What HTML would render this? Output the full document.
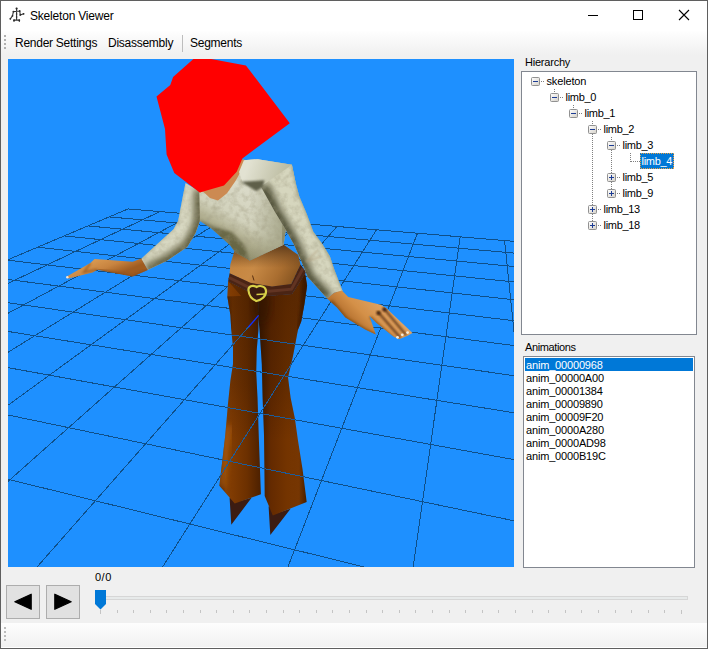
<!DOCTYPE html>
<html><head><meta charset="utf-8"><title>Skeleton Viewer</title>
<style>
html,body{margin:0;padding:0;}
body{width:708px;height:649px;overflow:hidden;background:#f0f0f0;position:relative;font-family:"Liberation Sans",sans-serif;color:#000;}
.abs{position:absolute;}
#win{position:absolute;left:0;top:0;width:708px;height:649px;box-sizing:border-box;border:1px solid #5f5f5f;background:#f0f0f0;}
#title{left:1px;top:1px;width:706px;height:30px;background:#fff;}
#title .t{left:29px;top:8px;font-size:12px;line-height:14px;white-space:nowrap;letter-spacing:-0.2px;}
#menu{left:1px;top:31px;width:706px;height:24px;background:linear-gradient(#fefefe,#f0f0f0);}
#menu span{position:absolute;top:5px;font-size:12px;line-height:14px;white-space:nowrap;letter-spacing:-0.26px;}
.lbl{font-size:11px;line-height:13px;white-space:nowrap;}
#tree{left:521px;top:71px;width:176px;height:264px;box-sizing:border-box;border:1px solid #828790;background:#fff;}
#list{left:523px;top:356px;width:172px;height:212px;box-sizing:border-box;border:1px solid #828790;background:#fff;}
#list div{letter-spacing:-0.17px;position:absolute;left:2px;font-size:11px;line-height:15px;height:13px;white-space:nowrap;}
#list .sel{left:1px;width:168px;background:#0078d7;color:#fff;padding-left:1px;box-sizing:border-box;}
.tn{position:absolute;font-size:11px;line-height:16px;height:16px;white-space:nowrap;}
.btn{width:34px;height:34px;box-sizing:border-box;border:1px solid #adadad;background:#e1e1e1;}
#status{left:1px;top:623px;width:706px;height:25px;background:linear-gradient(#fdfdfd,#f1f1f1 96%,#fff 96%);}
</style></head><body>
<div id="win"></div>
<div id="title" class="abs">
<svg class="abs" style="left:7px;top:5px" width="20" height="20" viewBox="8 6 20 20"><g stroke="#333" stroke-width="1.1" fill="none" stroke-linecap="round"><path d="M16.600 8.400V20M13.400 11.600L19.700 11M13.400 11.600L12.500 15.800L10.300 18.800M19.700 11L20.300 14.900L23.600 13.800M14 20.100H19.400M14 20.100V21.400M19.300 20.100V21.400"/></g><g fill="#2a2a2a"><circle cx="16.600" cy="8.500" r="1.100"/><circle cx="13.400" cy="11.600" r=".9"/><circle cx="19.700" cy="11" r=".9"/><circle cx="12.500" cy="15.800" r=".9"/><circle cx="10.300" cy="18.800" r=".9"/><circle cx="20.300" cy="14.900" r=".9"/><circle cx="23.600" cy="13.800" r=".9"/><circle cx="16.600" cy="14" r=".8"/><circle cx="16.600" cy="17.100" r=".8"/><circle cx="14" cy="20.200" r=".9"/><circle cx="19.300" cy="20.200" r=".9"/></g></svg>
<div class="abs t">Skeleton Viewer</div>
<svg class="abs" style="left:570px;top:0" width="136" height="30" viewBox="0 0 136 30"><g stroke="#000" stroke-width="1" fill="none" shape-rendering="crispEdges"><path d="M17 14.5h10"/><rect x="62.5" y="9.5" width="9" height="9"/></g><path d="M108 9l10 10M118 9l-10 10" stroke="#000" stroke-width="1.1" fill="none"/></svg>
</div>
<div id="menu" class="abs">
<svg class="abs" style="left:2px;top:2px" width="4" height="18"><g fill="#b0b0b0"><rect x="1" y="2" width="2" height="2"/><rect x="1" y="6" width="2" height="2"/><rect x="1" y="10" width="2" height="2"/><rect x="1" y="14" width="2" height="2"/></g></svg>
<span style="left:14px">Render Settings</span><span style="left:107px">Disassembly</span>
<div class="abs" style="left:181px;top:4px;width:1px;height:17px;background:#bdbdbd"></div>
<span style="left:189px">Segments</span>
</div>
<!-- VIEWPORT -->
<svg id="vp" class="abs" style="left:8px;top:59px" width="506" height="508" viewBox="8 59 506 508">
<defs>
<linearGradient id="gLegL" gradientUnits="userSpaceOnUse" x1="221" y1="0" x2="261" y2="0"><stop offset="0" stop-color="#522400"/><stop offset=".12" stop-color="#844006"/><stop offset=".3" stop-color="#7e3a02"/><stop offset=".65" stop-color="#6c3000"/><stop offset="1" stop-color="#4c2000"/></linearGradient>
<linearGradient id="gLegL2" gradientUnits="userSpaceOnUse" x1="219" y1="470" x2="262" y2="486"><stop offset="0" stop-color="#6a3000"/><stop offset=".15" stop-color="#a4560c"/><stop offset=".45" stop-color="#854004"/><stop offset="1" stop-color="#5a2600"/></linearGradient>
<linearGradient id="gLegR" gradientUnits="userSpaceOnUse" x1="259" y1="0" x2="306" y2="0"><stop offset="0" stop-color="#3a1800"/><stop offset=".25" stop-color="#642a00"/><stop offset=".6" stop-color="#743400"/><stop offset=".85" stop-color="#763602"/><stop offset="1" stop-color="#4a2000"/></linearGradient>
<linearGradient id="gThigh" gradientUnits="userSpaceOnUse" x1="0" y1="300" x2="0" y2="440"><stop offset="0" stop-color="#200c00" stop-opacity=".32"/><stop offset=".6" stop-color="#200c00" stop-opacity=".2"/><stop offset="1" stop-color="#200c00" stop-opacity="0"/></linearGradient>
<linearGradient id="gBelly" gradientUnits="userSpaceOnUse" x1="236" y1="250" x2="296" y2="284"><stop offset="0" stop-color="#c4843e"/><stop offset=".35" stop-color="#c88a46"/><stop offset=".7" stop-color="#aa6e30"/><stop offset="1" stop-color="#80501e"/></linearGradient>
<linearGradient id="gBellySh" gradientUnits="userSpaceOnUse" x1="0" y1="246" x2="0" y2="268"><stop offset="0" stop-color="#5a3818" stop-opacity=".9"/><stop offset="1" stop-color="#6a4420" stop-opacity="0"/></linearGradient>
<linearGradient id="gBlouse" gradientUnits="userSpaceOnUse" x1="222" y1="252" x2="262" y2="180"><stop offset="0" stop-color="#7e7c58"/><stop offset=".28" stop-color="#b4b294"/><stop offset=".45" stop-color="#d2d2bc"/><stop offset="1" stop-color="#dedece"/></linearGradient>
<linearGradient id="gBlouseR" gradientUnits="userSpaceOnUse" x1="250" y1="0" x2="290" y2="0"><stop offset="0" stop-color="#909070" stop-opacity="0"/><stop offset="1" stop-color="#8c8c6a" stop-opacity=".75"/></linearGradient>
<linearGradient id="gArmL" gradientUnits="userSpaceOnUse" x1="160" y1="222" x2="186" y2="252"><stop offset="0" stop-color="#d8d8c2"/><stop offset=".45" stop-color="#d0d0b6"/><stop offset="1" stop-color="#8a8a60"/></linearGradient>
<linearGradient id="gArmR" gradientUnits="userSpaceOnUse" x1="272" y1="230" x2="312" y2="214"><stop offset="0" stop-color="#5e5e42"/><stop offset=".3" stop-color="#b8b89a"/><stop offset=".6" stop-color="#d8d8c0"/><stop offset="1" stop-color="#b0b090"/></linearGradient>
<linearGradient id="gShould" gradientUnits="userSpaceOnUse" x1="250" y1="160" x2="290" y2="175"><stop offset="0" stop-color="#e2e2d2"/><stop offset="1" stop-color="#b8b89c"/></linearGradient>
<linearGradient id="gHandL" gradientUnits="userSpaceOnUse" x1="100" y1="258" x2="108" y2="278"><stop offset="0" stop-color="#d89850"/><stop offset=".5" stop-color="#c88440"/><stop offset="1" stop-color="#a05c20"/></linearGradient>
<linearGradient id="gHandR" gradientUnits="userSpaceOnUse" x1="345" y1="325" x2="375" y2="295"><stop offset="0" stop-color="#a86424"/><stop offset=".5" stop-color="#d49048"/><stop offset="1" stop-color="#e0a464"/></linearGradient>
<filter id="b3" x="-20%" y="-20%" width="140%" height="140%"><feGaussianBlur stdDeviation="3"/></filter><filter id="b2" x="-20%" y="-20%" width="140%" height="140%"><feGaussianBlur stdDeviation="1.800"/></filter><filter id="b1" x="-20%" y="-20%" width="140%" height="140%"><feGaussianBlur stdDeviation="0.900"/></filter>
<filter id="tex" x="0" y="0" width="100%" height="100%"><feTurbulence type="fractalNoise" baseFrequency="0.160" numOctaves="3" seed="7" result="n"/><feColorMatrix in="n" type="matrix" values="0 0 0 0 0.350  0 0 0 0 0.330  0 0 0 0 0.220  1.600 0 0 0 -0.620"/><feComposite in2="SourceGraphic" operator="in"/></filter>
<clipPath id="cArmR"><polygon points="264.2,184.2 291.9,164.8 295.6,182.4 299.3,196.2 306.7,213.8 313.2,231.4 322.5,244.3 329.9,256.3 334.5,270.0 342.6,291.0 334.1,292.7 327.1,298.4 307.7,277.1 301.2,261.0 293.8,244.3 285.5,229.5 274.4,211.0 260.5,186.0"/></clipPath><clipPath id="cArmL"><polygon points="185.5,183.0 182.7,197.0 178.1,221.0 173.5,229.3 154.0,246.9 141.1,258.9 147.6,270.0 167.0,260.8 187.3,246.9 195.6,233.0 199.9,221.0 200.5,192.0"/></clipPath><clipPath id="cBlouse"><polygon points="199.3,191.0 210.0,191.0 240.0,160.5 257.7,159.2 291.9,164.8 293.0,200.0 285.5,231.4 283.6,244.8 249.9,260.6 235.4,252.5 229.9,245.1 211.4,228.4 199.9,221.0"/></clipPath><clipPath id="cHandR"><polygon points="341.9,290.6 348.2,296.9 380.7,304.7 386.4,308.2 412.5,333.0 407.6,335.8 399.1,339.3 393.4,336.5 376.5,323.1 369.4,316.0 375.8,334.4 365.2,329.4 345.4,317.4 337.0,307.5 327.1,298.4 334.1,292.7"/></clipPath><clipPath id="cHandL"><polygon points="141.2,258.4 132.7,261.7 94.6,259.1 90.4,263.1 66.4,276.8 68.5,278.6 92.5,272.5 97.4,269.7 132.7,276.4 147.8,269.9"/></clipPath><clipPath id="cBelly"><polygon points="235.0,249.6 249.7,260.4 283.6,244.8 298.2,255.0 300.5,265.0 291.3,284.5 272.0,287.0 250.4,283.2 229.6,273.5 230.4,264.3"/></clipPath>
<clipPath id="cBelow"><polygon points="200,317.800 320,333.600 320,567 200,567"/></clipPath><clipPath id="cPants"><polygon points="228.1,281.0 250.4,292.5 258.6,295.0 258.4,330.0 256.7,350.3 256.2,372.4 257.5,397.8 258.9,440.0 260.9,494.3 234.7,503.6 219.4,485.8 225.3,435.0 227.9,404.6 230.4,380.8 233.0,363.9 233.0,347.0 231.3,330.0 230.4,315.1 227.3,296.6 258.6,295.0 268.9,295.7 292.0,294.0 305.1,273.5 307.1,285.8 304.4,304.3 301.3,321.3 297.9,330.0 293.1,355.4 288.0,377.5 290.6,397.8 294.8,418.1 297.9,440.0 302.5,468.9 306.7,502.0 272.8,515.5 264.7,496.0 264.0,435.0 262.6,397.8 261.8,363.9 259.6,330.0 258.2,315.5"/></clipPath>
</defs>
<rect x="8" y="59" width="506" height="508" fill="#1e90ff"/>
<g stroke="#0f4f88" stroke-width="1" shape-rendering="crispEdges"><line x1="128.1" y1="208.9" x2="599.1" y2="248.5"/><line x1="109.1" y1="216.9" x2="606.8" y2="261.4"/><line x1="87.9" y1="225.9" x2="615.6" y2="276.2"/><line x1="64.2" y1="235.9" x2="625.7" y2="293.4"/><line x1="37.4" y1="247.2" x2="637.6" y2="313.4"/><line x1="7.1" y1="260.1" x2="651.8" y2="337.2"/><line x1="-27.6" y1="274.8" x2="668.8" y2="365.8"/><line x1="-67.8" y1="291.8" x2="689.6" y2="401.0"/><line x1="-114.8" y1="311.7" x2="715.9" y2="445.2"/><line x1="-170.5" y1="335.2" x2="749.9" y2="502.5"/><line x1="-237.7" y1="363.6" x2="795.7" y2="579.7"/><line x1="-320.1" y1="398.5" x2="860.8" y2="689.2"/><line x1="-423.7" y1="442.3" x2="960.4" y2="857.0"/><line x1="128.1" y1="208.9" x2="-423.7" y2="442.3"/><line x1="159.9" y1="211.6" x2="-365.4" y2="459.8"/><line x1="192.9" y1="214.3" x2="-301.5" y2="478.9"/><line x1="227.0" y1="217.2" x2="-231.4" y2="499.9"/><line x1="262.3" y1="220.2" x2="-154.0" y2="523.1"/><line x1="299.0" y1="223.3" x2="-68.1" y2="548.9"/><line x1="337.0" y1="226.5" x2="27.7" y2="577.6"/><line x1="376.5" y1="229.8" x2="135.4" y2="609.8"/><line x1="417.5" y1="233.2" x2="257.1" y2="646.3"/><line x1="460.2" y1="236.8" x2="395.9" y2="687.9"/><line x1="504.6" y1="240.6" x2="555.7" y2="735.8"/><line x1="550.9" y1="244.4" x2="741.5" y2="791.5"/><line x1="599.1" y1="248.5" x2="960.4" y2="857.0"/></g>
<polygon points="229.6,497.7 231.3,524.8 251.6,497.7 240.0,501.0" fill="#3c1c12" /><polygon points="268.6,506.2 270.3,535.0 290.6,508.7 277.0,513.0" fill="#3c1c12" /><polygon points="228.1,281.0 250.4,292.5 258.6,295.0 258.4,330.0 256.7,350.3 256.2,372.4 257.5,397.8 258.9,440.0 260.9,494.3 234.7,503.6 219.4,485.8 225.3,435.0 227.9,404.6 230.4,380.8 233.0,363.9 233.0,347.0 231.3,330.0 230.4,315.1 227.3,296.6" fill="url(#gLegL)" /><polygon points="258.6,295.0 268.9,295.7 292.0,294.0 305.1,273.5 307.1,285.8 304.4,304.3 301.3,321.3 297.9,330.0 293.1,355.4 288.0,377.5 290.6,397.8 294.8,418.1 297.9,440.0 302.5,468.9 306.7,502.0 272.8,515.5 264.7,496.0 264.0,435.0 262.6,397.8 261.8,363.9 259.6,330.0 258.2,315.5" fill="url(#gLegR)" /><g clip-path="url(#cPants)"><polyline points="229.500,425 225,450 221,488" fill="none" stroke="#b05e0e" stroke-width="7" filter="url(#b3)" opacity=".8"/><rect x="215" y="275" width="100" height="170" fill="url(#gThigh)"/><ellipse cx="262" cy="303" rx="9" ry="20" fill="#341400" filter="url(#b3)" opacity=".55"/><polyline points="306,276 303,305 299,330" fill="none" stroke="#3a1800" stroke-width="5" filter="url(#b2)" opacity=".6"/><polyline points="228,283 228,300 231,330" fill="none" stroke="#3a1800" stroke-width="3" filter="url(#b2)" opacity=".5"/></g><g clip-path="url(#cBelow)"><g clip-path="url(#cPants)" stroke="#1c5c9a" stroke-width="1" shape-rendering="crispEdges"><line x1="128.1" y1="208.9" x2="599.1" y2="248.5"/><line x1="109.1" y1="216.9" x2="606.8" y2="261.4"/><line x1="87.9" y1="225.9" x2="615.6" y2="276.2"/><line x1="64.2" y1="235.9" x2="625.7" y2="293.4"/><line x1="37.4" y1="247.2" x2="637.6" y2="313.4"/><line x1="7.1" y1="260.1" x2="651.8" y2="337.2"/><line x1="-27.6" y1="274.8" x2="668.8" y2="365.8"/><line x1="-67.8" y1="291.8" x2="689.6" y2="401.0"/><line x1="-114.8" y1="311.7" x2="715.9" y2="445.2"/><line x1="-170.5" y1="335.2" x2="749.9" y2="502.5"/><line x1="-237.7" y1="363.6" x2="795.7" y2="579.7"/><line x1="-320.1" y1="398.5" x2="860.8" y2="689.2"/><line x1="-423.7" y1="442.3" x2="960.4" y2="857.0"/><line x1="128.1" y1="208.9" x2="-423.7" y2="442.3"/><line x1="159.9" y1="211.6" x2="-365.4" y2="459.8"/><line x1="192.9" y1="214.3" x2="-301.5" y2="478.9"/><line x1="227.0" y1="217.2" x2="-231.4" y2="499.9"/><line x1="262.3" y1="220.2" x2="-154.0" y2="523.1"/><line x1="299.0" y1="223.3" x2="-68.1" y2="548.9"/><line x1="337.0" y1="226.5" x2="27.7" y2="577.6"/><line x1="376.5" y1="229.8" x2="135.4" y2="609.8"/><line x1="417.5" y1="233.2" x2="257.1" y2="646.3"/><line x1="460.2" y1="236.8" x2="395.9" y2="687.9"/><line x1="504.6" y1="240.6" x2="555.7" y2="735.8"/><line x1="550.9" y1="244.4" x2="741.5" y2="791.5"/><line x1="599.1" y1="248.5" x2="960.4" y2="857.0"/></g></g><polygon points="235.0,249.6 249.7,260.4 283.6,244.8 298.2,255.0 300.5,265.0 291.3,284.5 272.0,287.0 250.4,283.2 229.6,273.5 230.4,264.3" fill="url(#gBelly)" /><polygon points="235.0,249.6 249.7,260.4 283.6,244.8 298.2,255.0 300.5,265.0 291.3,284.5 272.0,287.0 250.4,283.2 229.6,273.5 230.4,264.3" fill="url(#gBellySh)" /><path d="M252.5 275.5l1.5 5" stroke="#5a3010" stroke-width="1" fill="none"/><polygon points="229.6,273.3 250.4,282.8 272.0,286.6 291.3,284.0 300.5,264.5 305.9,272.0 305.1,274.0 292.0,294.3 268.9,295.9 250.4,292.8 228.1,281.2" fill="#4a2414" /><polyline points="229,277.5 250.4,288 269,291.3 291.5,289.2 303,268.5" fill="none" stroke="#623422" stroke-width="3"/><path d="M248.5 290.5c-.5-4 4-6 8-3.5c3.5-2 9.5-1 9.500 4.5c0 5-4.500 8.500-9.500 9.500c-4.500-1.500-7.500-5.500-8-10.500z" fill="#3a1c10" stroke="#d8d048" stroke-width="2.200"/><path d="M256.5 294.500l8.500-.5" stroke="#d8d048" stroke-width="1.500"/><polygon points="185.5,183.0 182.7,197.0 178.1,221.0 173.5,229.3 154.0,246.9 141.1,258.9 147.6,270.0 167.0,260.8 187.3,246.9 195.6,233.0 199.9,221.0 200.5,192.0" fill="#d8d8c2" /><g clip-path="url(#cArmL)"><polyline points="202,190 201.500,221 197,234 188.500,248.500 168,262.500 148,272" fill="none" stroke="#5e5c3e" stroke-width="16" filter="url(#b3)" opacity=".95"/><polyline points="184,183 181,197 176.500,221 172,229 153,246 140,258" fill="none" stroke="#a0a080" stroke-width="4" filter="url(#b2)" opacity=".6"/></g><polygon points="185.5,183.0 182.7,197.0 178.1,221.0 173.5,229.3 154.0,246.9 141.1,258.9 147.6,270.0 167.0,260.8 187.3,246.9 195.6,233.0 199.9,221.0 200.5,192.0" fill="#fff" filter="url(#tex)" opacity=".5"/><polygon points="141.2,258.4 132.7,261.7 94.6,259.1 90.4,263.1 66.4,276.8 68.5,278.6 92.5,272.5 97.4,269.7 132.7,276.4 147.8,269.9" fill="url(#gHandL)" /><circle cx="67.300" cy="277.300" r="1.200" fill="#f0e8e0"/><g clip-path="url(#cHandL)"><polyline points="90.400,263.100 84,272 97.400,269.700" fill="none" stroke="#9a5c20" stroke-width="2" filter="url(#b1)" opacity=".8"/><polyline points="97.400,270.700 132.700,277.400 148,271" fill="none" stroke="#8a4c14" stroke-width="4" filter="url(#b2)" opacity=".9"/></g><polygon points="199.3,191.0 210.0,191.0 240.0,160.5 257.7,159.2 291.9,164.8 293.0,200.0 285.5,231.4 283.6,244.8 249.9,260.6 235.4,252.5 229.9,245.1 211.4,228.4 199.9,221.0" fill="url(#gBlouse)" /><polygon points="199.3,191.0 210.0,191.0 240.0,160.5 257.7,159.2 291.9,164.8 293.0,200.0 285.5,231.4 283.6,244.8 249.9,260.6 235.4,252.5 229.9,245.1 211.4,228.4 199.9,221.0" fill="url(#gBlouseR)" /><g clip-path="url(#cBlouse)"><polygon points="199,220 212,226 232,232 245,246 249,262 234,254 210,232" fill="#605e3e" filter="url(#b2)" opacity=".85"/><polyline points="287,200 285,232 283,246" fill="none" stroke="#6e6c4a" stroke-width="7" filter="url(#b3)" opacity=".7"/></g><polygon points="199.3,191.0 210.0,191.0 240.0,160.5 257.7,159.2 291.9,164.8 293.0,200.0 285.5,231.4 283.6,244.8 249.9,260.6 235.4,252.5 229.9,245.1 211.4,228.4 199.9,221.0" fill="#fff" filter="url(#tex)" opacity=".6"/><polygon points="199.0,192.9 203.0,191.4 210.0,198.0 218.0,200.5 227.0,193.2 235.8,180.5 242.2,169.0 247.3,162.7 243.5,159.0 225.0,170.0 210.0,185.0" fill="#cc8a52" /><polygon points="243.9,160.2 257.7,159.2 291.9,164.8 295.6,182.4 264.2,184.2 242.9,182.4 239.0,172.0" fill="url(#gShould)" /><polygon points="264.2,184.2 291.9,164.8 295.6,182.4 299.3,196.2 306.7,213.8 313.2,231.4 322.5,244.3 329.9,256.3 334.5,270.0 342.6,291.0 334.1,292.7 327.1,298.4 307.7,277.1 301.2,261.0 293.8,244.3 285.5,229.5 274.4,211.0 260.5,186.0" fill="#d6d6be" /><g clip-path="url(#cArmR)"><polyline points="263,186 274.4,211 285.5,229.5 293.8,244.3 301.2,261 307.7,277.1 327.8,299" fill="none" stroke="#4e4e34" stroke-width="13" filter="url(#b3)" opacity=".95"/><polyline points="293,164 297,183 300.500,196.200 308,213.800 314.500,231.400 323.800,244.300 331,256.300 335.500,270 345,292.500" fill="none" stroke="#8c8c68" stroke-width="4" filter="url(#b2)" opacity=".7"/><polyline points="318,250 306,262 322,256" fill="none" stroke="#b0a080" stroke-width="1.500" filter="url(#b1)" opacity=".7"/></g><polygon points="264.2,184.2 291.9,164.8 295.6,182.4 299.3,196.2 306.7,213.8 313.2,231.4 322.5,244.3 329.9,256.3 334.5,270.0 342.6,291.0 334.1,292.7 327.1,298.4 307.7,277.1 301.2,261.0 293.8,244.3 285.5,229.5 274.4,211.0 260.5,186.0" fill="#fff" filter="url(#tex)" opacity=".55"/><polygon points="240.9,181.8 264.5,180.3 263.0,187.0 256.2,191.0" fill="#5e5e48" filter="url(#b1)"/><polygon points="341.9,290.6 348.2,296.9 380.7,304.7 386.4,308.2 412.5,333.0 407.6,335.8 399.1,339.3 393.4,336.5 376.5,323.1 369.4,316.0 375.8,334.4 365.2,329.4 345.4,317.4 337.0,307.5 327.1,298.4 334.1,292.7" fill="url(#gHandR)" /><g clip-path="url(#cHandR)"><polyline points="377.900,311.800 400.500,337.900" fill="none" stroke="#5a3010" stroke-width="1.800" filter="url(#b1)"/><polyline points="383.600,308.200 406.200,335.100" fill="none" stroke="#5a3010" stroke-width="1.800" filter="url(#b1)"/><circle cx="378.500" cy="313" r="2" fill="#3a1c08" filter="url(#b1)"/><circle cx="384.500" cy="309.500" r="2" fill="#3a1c08" filter="url(#b1)"/><polyline points="330,302 345.400,320 365.200,332 376,337" fill="none" stroke="#7a4410" stroke-width="6" filter="url(#b2)" opacity=".85"/><polyline points="370,317 394,339" fill="none" stroke="#8a5018" stroke-width="3" filter="url(#b1)" opacity=".8"/></g><g fill="#f4ecdc"><circle cx="397.500" cy="337.300" r="1.400"/><circle cx="402.300" cy="334.800" r="1.400"/><circle cx="407.600" cy="332.600" r="1.400"/></g><polygon points="193.4,59.0 211.2,59.0 245.9,65.4 251.7,73.0 289.8,123.2 242.4,158.5 236.7,171.7 224.0,185.6 199.7,192.5 174.3,172.9 166.6,154.4 165.0,129.0 156.5,96.6 170.3,85.0 173.1,77.0" fill="#ff0000" /><line x1="248.5" y1="327" x2="258.6" y2="315.4" stroke="#1030ff" stroke-width="1.3"/>
</svg>
<div class="abs lbl" style="left:525px;top:56px;letter-spacing:-0.22px">Hierarchy</div>
<div id="tree" class="abs"></div>
<svg id="treesvg" class="abs" style="left:522px;top:72px" width="174" height="262" viewBox="522 72 174 262" font-family="'Liberation Sans',sans-serif" font-size="11px">
<defs><linearGradient id="bx" x1="0" y1="0" x2="1" y2="1"><stop offset="0" stop-color="#fff"/><stop offset="1" stop-color="#d4d0c8"/></linearGradient></defs>
<g stroke="#808080" stroke-width="1" stroke-dasharray="1,1" shape-rendering="crispEdges"><line x1="541" y1="81.5" x2="544" y2="81.5"/><line x1="554.5" y1="89" x2="554.5" y2="93"/><line x1="560" y1="97.5" x2="563" y2="97.5"/><line x1="573.5" y1="105" x2="573.5" y2="109"/><line x1="579" y1="113.5" x2="582" y2="113.5"/><line x1="592.5" y1="121" x2="592.5" y2="125"/><line x1="598" y1="129.5" x2="601" y2="129.5"/><line x1="611.5" y1="137" x2="611.5" y2="141"/><line x1="617" y1="145.5" x2="620" y2="145.5"/><line x1="630.5" y1="153" x2="630.5" y2="162"/><line x1="631" y1="161.5" x2="640" y2="161.5"/><line x1="617" y1="177.5" x2="620" y2="177.5"/><line x1="617" y1="193.5" x2="620" y2="193.5"/><line x1="598" y1="209.5" x2="601" y2="209.5"/><line x1="598" y1="225.5" x2="601" y2="225.5"/><line x1="611.5" y1="150" x2="611.5" y2="173"/><line x1="611.5" y1="182" x2="611.5" y2="189"/><line x1="592.5" y1="134" x2="592.5" y2="205"/><line x1="592.5" y1="214" x2="592.5" y2="221"/></g>
<rect x="531.5" y="77.5" width="8" height="8" rx="1" fill="url(#bx)" stroke="#919191"/>
<path d="M533 81.5h5" stroke="#1c3c94" stroke-width="1" shape-rendering="crispEdges"/>
<text x="546.5" y="85" letter-spacing="-0.15">skeleton</text>
<rect x="550.5" y="93.5" width="8" height="8" rx="1" fill="url(#bx)" stroke="#919191"/>
<path d="M552 97.5h5" stroke="#1c3c94" stroke-width="1" shape-rendering="crispEdges"/>
<text x="565.5" y="101" letter-spacing="-0.3">limb_0</text>
<rect x="569.5" y="109.5" width="8" height="8" rx="1" fill="url(#bx)" stroke="#919191"/>
<path d="M571 113.5h5" stroke="#1c3c94" stroke-width="1" shape-rendering="crispEdges"/>
<text x="584.5" y="117" letter-spacing="-0.3">limb_1</text>
<rect x="588.5" y="125.5" width="8" height="8" rx="1" fill="url(#bx)" stroke="#919191"/>
<path d="M590 129.5h5" stroke="#1c3c94" stroke-width="1" shape-rendering="crispEdges"/>
<text x="603.5" y="133" letter-spacing="-0.3">limb_2</text>
<rect x="607.5" y="141.5" width="8" height="8" rx="1" fill="url(#bx)" stroke="#919191"/>
<path d="M609 145.5h5" stroke="#1c3c94" stroke-width="1" shape-rendering="crispEdges"/>
<text x="622.5" y="149" letter-spacing="-0.3">limb_3</text>
<rect x="640" y="153" width="34" height="16" fill="#0078d7"/>
<rect x="640.5" y="153.5" width="33" height="15" fill="none" stroke="#e8a040" stroke-dasharray="1,1" shape-rendering="crispEdges"/>
<text x="641.5" y="165" fill="#fff" letter-spacing="-0.3">limb_4</text>
<rect x="607.5" y="173.5" width="8" height="8" rx="1" fill="url(#bx)" stroke="#919191"/>
<path d="M609 177.5h5" stroke="#1c3c94" stroke-width="1" shape-rendering="crispEdges"/>
<path d="M611.5 175v5" stroke="#1c3c94" stroke-width="1" shape-rendering="crispEdges"/>
<text x="622.5" y="181" letter-spacing="-0.3">limb_5</text>
<rect x="607.5" y="189.5" width="8" height="8" rx="1" fill="url(#bx)" stroke="#919191"/>
<path d="M609 193.5h5" stroke="#1c3c94" stroke-width="1" shape-rendering="crispEdges"/>
<path d="M611.5 191v5" stroke="#1c3c94" stroke-width="1" shape-rendering="crispEdges"/>
<text x="622.5" y="197" letter-spacing="-0.3">limb_9</text>
<rect x="588.5" y="205.5" width="8" height="8" rx="1" fill="url(#bx)" stroke="#919191"/>
<path d="M590 209.5h5" stroke="#1c3c94" stroke-width="1" shape-rendering="crispEdges"/>
<path d="M592.5 207v5" stroke="#1c3c94" stroke-width="1" shape-rendering="crispEdges"/>
<text x="603.5" y="213" letter-spacing="-0.3">limb_13</text>
<rect x="588.5" y="221.5" width="8" height="8" rx="1" fill="url(#bx)" stroke="#919191"/>
<path d="M590 225.5h5" stroke="#1c3c94" stroke-width="1" shape-rendering="crispEdges"/>
<path d="M592.5 223v5" stroke="#1c3c94" stroke-width="1" shape-rendering="crispEdges"/>
<text x="603.5" y="229" letter-spacing="-0.3">limb_18</text>
</svg>
<div class="abs lbl" style="left:525px;top:341px;letter-spacing:-0.39px">Animations</div>
<div id="list" class="abs">
<div class="sel" style="top:1px">anim_00000968</div>
<div style="top:14px">anim_00000A00</div>
<div style="top:27px">anim_00001384</div>
<div style="top:40px">anim_00009890</div>
<div style="top:53px">anim_00009F20</div>
<div style="top:66px">anim_0000A280</div>
<div style="top:79px">anim_0000AD98</div>
<div style="top:92px">anim_0000B19C</div>
</div>
<div class="abs lbl" style="left:95px;top:571px;letter-spacing:0.5px">0/0</div>
<div class="abs btn" style="left:6px;top:585px"><svg class="abs" style="left:0;top:0" width="32" height="32" viewBox="7 586 32 32"><polygon points="14.800,601.700 31.200,594.200 31.200,609.300" fill="#000" stroke="#000" stroke-width="1.200" stroke-linejoin="round"/></svg></div>
<div class="abs btn" style="left:46px;top:585px"><svg class="abs" style="left:0;top:0" width="32" height="32" viewBox="47 586 32 32"><polygon points="71.200,601.700 54.800,594.200 54.800,609.300" fill="#000" stroke="#000" stroke-width="1.200" stroke-linejoin="round"/></svg></div>
<svg class="abs" style="left:90px;top:586px" width="610" height="34" viewBox="90 586 610 34"><rect x="100.500" y="596.500" width="587" height="3" fill="#e7eaea" stroke="#d6d6d6"/><g fill="#c4c4c4" shape-rendering="crispEdges"><rect x="100.0" y="610" width="1" height="4"/><rect x="116.6" y="610" width="1" height="3"/><rect x="133.2" y="610" width="1" height="3"/><rect x="149.8" y="610" width="1" height="3"/><rect x="166.4" y="610" width="1" height="3"/><rect x="183.0" y="610" width="1" height="3"/><rect x="199.6" y="610" width="1" height="3"/><rect x="216.2" y="610" width="1" height="3"/><rect x="232.8" y="610" width="1" height="3"/><rect x="249.4" y="610" width="1" height="3"/><rect x="266.0" y="610" width="1" height="3"/><rect x="282.6" y="610" width="1" height="3"/><rect x="299.2" y="610" width="1" height="3"/><rect x="315.8" y="610" width="1" height="3"/><rect x="332.4" y="610" width="1" height="3"/><rect x="349.0" y="610" width="1" height="3"/><rect x="365.6" y="610" width="1" height="3"/><rect x="382.2" y="610" width="1" height="3"/><rect x="398.8" y="610" width="1" height="3"/><rect x="415.4" y="610" width="1" height="3"/><rect x="432.0" y="610" width="1" height="3"/><rect x="448.6" y="610" width="1" height="3"/><rect x="465.2" y="610" width="1" height="3"/><rect x="481.8" y="610" width="1" height="3"/><rect x="498.4" y="610" width="1" height="3"/><rect x="515.0" y="610" width="1" height="3"/><rect x="531.6" y="610" width="1" height="3"/><rect x="548.2" y="610" width="1" height="3"/><rect x="564.8" y="610" width="1" height="3"/><rect x="581.4" y="610" width="1" height="3"/><rect x="598.0" y="610" width="1" height="3"/><rect x="614.6" y="610" width="1" height="3"/><rect x="631.2" y="610" width="1" height="3"/><rect x="647.8" y="610" width="1" height="3"/><rect x="664.4" y="610" width="1" height="3"/><rect x="681.0" y="610" width="1" height="4"/></g><polygon points="95,590 106,590 106,604 100.500,609.500 95,604" fill="#0078d7"/></svg>
<div id="status" class="abs"><svg class="abs" style="left:2px;top:3px" width="4" height="18"><g fill="#bcbcbc"><rect x="1" y="1" width="2" height="2"/><rect x="1" y="5" width="2" height="2"/><rect x="1" y="9" width="2" height="2"/><rect x="1" y="13" width="2" height="2"/></g></svg></div>
</body></html>
